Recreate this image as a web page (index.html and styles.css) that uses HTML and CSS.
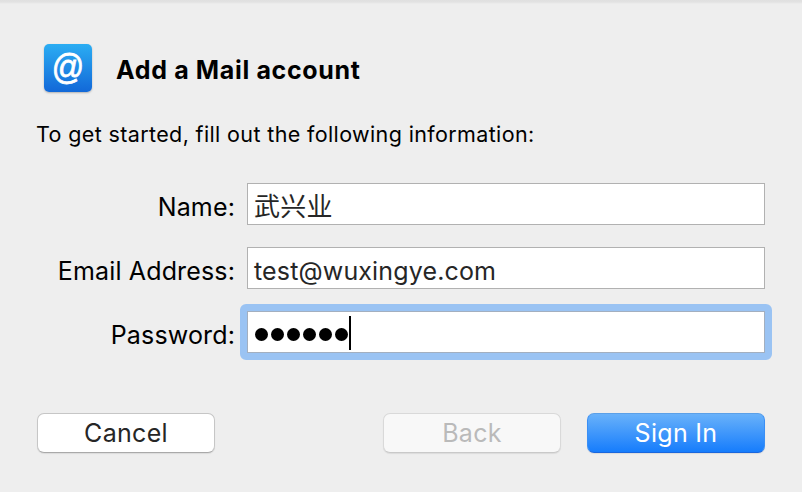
FILE: index.html
```html
<!DOCTYPE html>
<html lang="en">
<head>
<meta charset="utf-8">
<title>Add a Mail account</title>
<link rel="stylesheet" href="styles.css">
</head>
<body>
<main class="sheet">
  <header class="heading">
    <div class="logo"><span class="at">@</span></div>
    <h1>Add a Mail account</h1>
  </header>
  <p class="intro">To get started, fill out the following information:</p>
  <section class="form">
    <div class="row"><span class="label">Name:</span><div class="field cjk">武兴业</div></div>
    <div class="row"><span class="label">Email Address:</span><div class="field">test@wuxingye.com</div></div>
    <div class="row"><span class="label">Password:</span><div class="field focused"><i class="dot"></i><i class="dot"></i><i class="dot"></i><i class="dot"></i><i class="dot"></i><i class="dot"></i><i class="caret"></i></div></div>
  </section>
  <footer class="actions">
    <button class="btn cancel">Cancel</button>
    <button class="btn back" disabled>Back</button>
    <button class="btn primary">Sign In</button>
  </footer>
</main>
</body>
</html>
```
FILE: styles.css
```css
body { margin: 0; }
.sheet { box-sizing: border-box; width: 802px; height: 492px; padding: 44px 37px 0; background: linear-gradient(#e0e0e0, #e2e2e2 2px, #eee 4px); font: 25px/30px Inter, "Noto Sans CJK SC", sans-serif; letter-spacing: .15px; color: #000; overflow: hidden; }
.heading { display: flex; align-items: center; gap: 24px; height: 48px; padding-left: 7px; }
.logo { width: 48px; height: 48px; border-radius: 5px; background: linear-gradient(#2badf3, #1268d8); box-shadow: 0 1px 2px rgba(0, 0, 0, .25); color: #fff; text-align: center; font: 32px/46px "Liberation Sans", sans-serif; letter-spacing: 0; -webkit-text-stroke: .7px #fff; }
.at { display: inline-block; transform: scaleY(1.08); }
h1 { margin: 4px 0 0; font-size: 25px; line-height: 30px; font-weight: 700; letter-spacing: .65px; white-space: nowrap; }
.intro { margin: 27px 0 34px -1px; font-size: 21.5px; line-height: 30px; letter-spacing: .37px; white-space: nowrap; }
.form { display: flex; flex-direction: column; gap: 22px; }
.row { display: flex; gap: 12px; height: 42px; align-items: center; }
.label { width: 198px; padding-top: 6px; display: flex; justify-content: flex-end; white-space: nowrap; }
.field { box-sizing: border-box; width: 518px; height: 42px; padding: 6px 6px 0; border: 1px solid #b1b1b1; background: #fff; display: flex; align-items: center; color: #262626; }
.cjk { font-size: 26px; letter-spacing: .3px; }
.focused { position: relative; padding-top: 1px; border-color: #a3afbf; }
.focused::before { content: ""; position: absolute; inset: -8px; border: 7px solid #9ac3f3; border-radius: 6px; }
.dot { width: 13px; height: 13px; border-radius: 50%; background: #000; margin: 3px 1.4px 0; }
.dot + .dot { margin-left: 1.5px; }
.caret { width: 2px; height: 34px; background: #000; }
.actions { display: flex; margin-top: 60px; }
.btn { box-sizing: border-box; width: 178px; height: 40px; padding: 0; border: 1px solid #c6c6c6; border-bottom-color: #a9a9a9; border-radius: 7px; background: #fff; font: inherit; letter-spacing: .3px; color: #262626; box-shadow: 0 1px 1px rgba(0, 0, 0, .08); }
.back { margin-left: auto; color: #bababa; background: #f8f8f8; border-color: #d9d9d9; border-bottom-color: #c9c9c9; }
.primary { margin-left: 26px; color: #fff; background: linear-gradient(#6bb3fa, #147bfc) border-box; border-color: #5ba0e8 #3a8ff5 #1a66dd; }
```
